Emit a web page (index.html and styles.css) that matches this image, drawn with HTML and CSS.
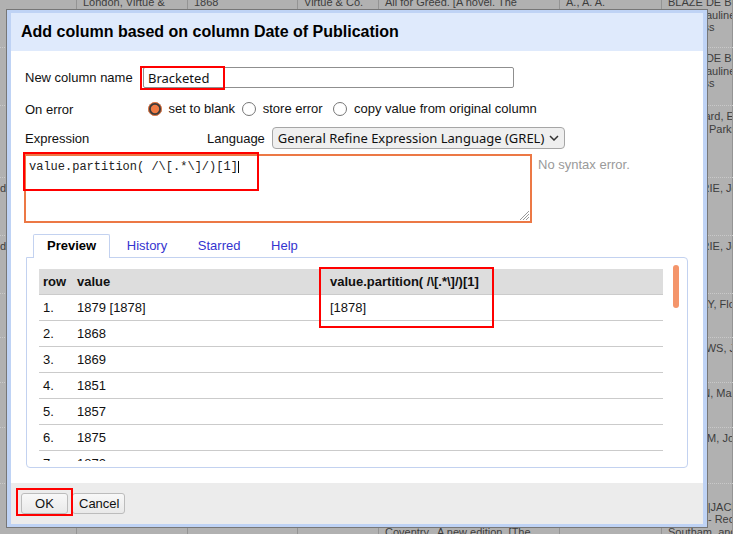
FILE: index.html
```html
<!DOCTYPE html>
<html>
<head>
<meta charset="utf-8">
<title>Add column</title>
<link rel="stylesheet" href="styles.css">
</head>
<body>
<div class="bg">
  <div class="bgrow h0">
    <div class="c c0"></div>
    <div class="c">London, Virtue &amp;</div>
    <div class="c">1868</div>
    <div class="c">Virtue &amp; Co.</div>
    <div class="c">All for Greed. [A novel. The</div>
    <div class="c">A., A. A.</div>
    <div class="c">BLAZE DE BURY,<br>Marie Pauline Rose<br>Baroness</div>
  </div>
  <div class="bgrow h1">
    <div class="c c0"></div><div class="c"></div><div class="c"></div><div class="c"></div><div class="c"></div><div class="c"></div>
    <div class="c">BLAZE DE BURY,<br>Marie Pauline Rose<br>Baroness</div>
  </div>
  <div class="bgrow h2">
    <div class="c c0"></div><div class="c"></div><div class="c"></div><div class="c"></div><div class="c"></div><div class="c"></div>
    <div class="c">Woodward, Ernest<br>Richard Parks.</div>
  </div>
  <div class="bgrow h3">
    <div class="c c0">d</div><div class="c"></div><div class="c"></div><div class="c"></div><div class="c"></div><div class="c"></div>
    <div class="c">GOODRIE, John</div>
  </div>
  <div class="bgrow h4">
    <div class="c c0">d</div><div class="c"></div><div class="c"></div><div class="c"></div><div class="c"></div><div class="c"></div>
    <div class="c">GOODRIE, Jones</div>
  </div>
  <div class="bgrow h5">
    <div class="c c0"></div><div class="c"></div><div class="c"></div><div class="c"></div><div class="c"></div><div class="c"></div>
    <div class="c">MURRAY, Florence</div>
  </div>
  <div class="bgrow h6">
    <div class="c c0"></div><div class="c"></div><div class="c"></div><div class="c"></div><div class="c"></div><div class="c"></div>
    <div class="c">MATHEWS, James</div>
  </div>
  <div class="bgrow h7">
    <div class="c c0"></div><div class="c"></div><div class="c"></div><div class="c"></div><div class="c"></div><div class="c"></div>
    <div class="c">BROWN, Mary</div>
  </div>
  <div class="bgrow h8">
    <div class="c c0"></div><div class="c"></div><div class="c"></div><div class="c"></div><div class="c"></div><div class="c"></div>
    <div class="c">GRAHAM, John</div>
  </div>
  <div class="bgrow h9">
    <div class="c c0"></div><div class="c"></div><div class="c"></div>
    <div class="c"></div>
    <div class="c"><br><br><br>Coventry<span class="gap">A new edition. [The</span></div>
    <div class="c"></div>
    <div class="c">LEE, A.<br>HARIS&nbsp; |JACKSON<br>Walters - Recorder<br>Southam, and</div>
  </div>
</div>

<div class="dialog">
  <div class="dlg-head">Add column based on column Date of Publication</div>
  <div class="dlg-body">
    <div class="frow r-name">
      <label class="lbl" for="colname">New column name</label>
      <input id="colname" class="name-input" type="text" value="Bracketed">
    </div>
    <div class="frow r-err">
      <span class="lbl">On error</span>
      <div class="radios"><label class="opt"><input type="radio" name="onerr" checked> set to blank</label><label class="opt next"><input type="radio" name="onerr"> store error</label> <label class="opt next"><input type="radio" name="onerr"> copy value from original column</label></div>
    </div>
    <div class="frow r-expr">
      <span class="lbl lbl-expr">Expression</span>
      <span class="lang">Language</span>
      <div class="select"><span>General Refine Expression Language (GREL)</span><svg class="chev" width="10" height="6" viewBox="0 0 10 6"><polyline points="1,1 5,5 9,1" fill="none" stroke="#333" stroke-width="1.5"/></svg></div>
    </div>
    <div class="frow r-area">
      <div class="area"><span class="code">value.partition( /\[.*\]/)[1]</span><span class="caret"></span><svg class="grip" width="10" height="10" viewBox="0 0 10 10"><line x1="10" y1="1" x2="1" y2="10" stroke="#999" stroke-width="1"/><line x1="10" y1="4" x2="4" y2="10" stroke="#999" stroke-width="1"/><line x1="10" y1="7" x2="7" y2="10" stroke="#999" stroke-width="1"/></svg></div>
      <div class="status">No syntax error.</div>
    </div>
    <div class="tabs">
      <ul class="tablist">
        <li class="tab active">Preview</li>
        <li class="tab">History</li>
        <li class="tab">Starred</li>
        <li class="tab">Help</li>
      </ul>
      <div class="panel">
        <div class="scroll">
          <table class="preview">
            <colgroup><col class="k1"><col class="k2"><col class="k3"></colgroup>
            <thead>
              <tr><th>row</th><th>value</th><th>value.partition( /\[.*\]/)[1]</th></tr>
            </thead>
            <tbody>
              <tr><td>1.</td><td>1879 [1878]</td><td>[1878]</td></tr>
              <tr><td>2.</td><td>1868</td><td></td></tr>
              <tr><td>3.</td><td>1869</td><td></td></tr>
              <tr><td>4.</td><td>1851</td><td></td></tr>
              <tr><td>5.</td><td>1857</td><td></td></tr>
              <tr><td>6.</td><td>1875</td><td></td></tr>
              <tr><td>7.</td><td>1872</td><td></td></tr>
            </tbody>
          </table>
          <div class="thumb"></div>
        </div>
      </div>
    </div>
  </div>
  <div class="dlg-foot">
    <button class="btn ok" type="button">OK</button>
    <button class="btn cancel" type="button">Cancel</button>
  </div>
</div>

<div class="mark m-name"></div>
<div class="mark m-expr"></div>
<div class="mark m-col"></div>
<div class="mark m-ok"></div>
</body>
</html>
```

FILE: styles.css
```css
html, body {
  margin: 0;
  padding: 0;
}
body {
  width: 733px;
  height: 534px;
  overflow: hidden;
  position: relative;
  background: #b1b1b1;
  font-family: "Liberation Sans", Arial, sans-serif;
  font-size: 13px;
  color: #111;
}

/* background spreadsheet */
.bg {
  margin-top: -8px;
}
.bgrow {
  display: grid;
  grid-template-columns: 77px 111px 110px 81px 181px 102px 1fr;
  border-top: 1px dotted #c9c9c9;
  box-sizing: border-box;
}
.bgrow.h0 { height: 55px; border-top: none; }
.bgrow.h1 { height: 58px; }
.bgrow.h2 { height: 72px; }
.bgrow.h3 { height: 58px; }
.bgrow.h4 { height: 58px; }
.bgrow.h5 { height: 44px; }
.bgrow.h6 { height: 45px; }
.bgrow.h7 { height: 45px; }
.bgrow.h8 { height: 56px; }
.bgrow.h9 { height: 60px; }
.c {
  border-right: 1px solid #949494;
  padding: 4px 6px 0;
  font-size: 11px;
  line-height: 12.5px;
  color: #3d3d3d;
  white-space: nowrap;
  overflow: hidden;
}
.c.c0 { padding-left: 0; }
.gap { margin-left: 8px; }

/* dialog */
.dialog {
  position: absolute;
  left: 6px;
  top: 9px;
  width: 702px;
  height: 519px;
  box-sizing: border-box;
  border: 1px solid #777;
  background: #bfd3f5;
  padding: 3px 4px;
  display: flex;
  flex-direction: column;
}
.dlg-head {
  height: 38px;
  flex: none;
  background: #dfeafc;
  display: flex;
  align-items: center;
  padding-left: 10px;
  font-weight: bold;
  font-size: 16px;
  color: #000;
}
.dlg-body {
  height: 432px;
  flex: none;
  box-sizing: border-box;
  background: #fff;
  padding: 16px 15px 0 14px;
}
.dlg-foot {
  height: 41px;
  flex: none;
  box-sizing: border-box;
  background: #ececec;
  padding: 10px 10px 0;
  display: flex;
  gap: 4px;
  align-items: flex-start;
}

.frow {
  display: flex;
  align-items: center;
}
.lbl {
  width: 118px;
  flex: none;
}
.r-name { height: 21px; }
.name-input {
  width: 371px;
  height: 21px;
  box-sizing: border-box;
  border: 1px solid #8f8f8f;
  border-radius: 2px;
  padding: 0 4px;
  margin: 0;
  font-family: "Noto Sans", sans-serif;
  font-size: 13px;
  color: #111;
  outline: none;
}

.r-err {
  height: 22px;
  margin-top: 10px;
}
.radios {
  white-space: nowrap;
  line-height: 15px;
}
.opt input {
  accent-color: #ef7a43;
  width: 14px;
  height: 14px;
  margin: 0 3px 0 5px;
  vertical-align: middle;
  position: relative;
  top: -1px;
}
.opt.next input {
  margin-left: 7px;
}

.r-expr {
  height: 22px;
  margin-top: 7px;
}
.lbl-expr { width: 182px; }
.lang { margin-right: 7px; }
.select {
  width: 293px;
  height: 22px;
  box-sizing: border-box;
  border: 1px solid #a6a6a6;
  border-radius: 4px;
  background: #efefef;
  display: flex;
  align-items: center;
  padding-left: 5px;
  font-family: "Noto Sans", sans-serif;
  font-size: 13px;
  color: #111;
}
.chev {
  margin-left: auto;
  margin-right: 5px;
}

.r-area {
  margin-top: 5px;
  align-items: flex-start;
}
.area {
  position: relative;
  width: 508px;
  height: 69px;
  margin-left: -1px;
  box-sizing: border-box;
  border: 2px solid #ec7845;
  padding: 4px 3px;
  font-family: "Liberation Mono", "Courier New", monospace;
  font-size: 12px;
  line-height: 15px;
  color: #222;
  white-space: pre;
}
.caret {
  display: inline-block;
  width: 1px;
  height: 12px;
  background: #000;
  vertical-align: -3px;
}
.grip {
  position: absolute;
  right: 1px;
  bottom: 1px;
}
.status {
  margin-left: 6px;
  margin-top: 3px;
  line-height: 15px;
  color: #9a9a9a;
}

/* tabs */
.tabs {
  margin-top: 11px;
  margin-left: 1px;
  width: 662px;
}
.tablist {
  list-style: none;
  margin: 0;
  padding: 0 0 0 7px;
  display: flex;
  gap: 2.6px;
  position: relative;
  z-index: 1;
}
.tab {
  height: 22px;
  line-height: 22px;
  padding: 0 13px;
  border: 1px solid transparent;
  border-bottom: none;
  color: #3434cf;
}
.tab.active {
  border-color: #c3d2f0;
  border-radius: 2px 2px 0 0;
  background: #fff;
  color: #000;
  font-weight: bold;
  height: 23px;
  margin-bottom: -1px;
}
.panel {
  height: 211px;
  box-sizing: border-box;
  border: 1px solid #c3d2f0;
  border-radius: 0 4px 4px 4px;
  padding: 7px 8px 6px 12px;
}
.scroll {
  position: relative;
  height: 196px;
  overflow: hidden;
}
.thumb {
  position: absolute;
  right: 0;
  top: 0;
  width: 6px;
  height: 43px;
  border-radius: 3px;
  background: #f4956b;
}
.preview {
  margin-top: 4px;
  width: 624px;
  border-collapse: collapse;
  table-layout: fixed;
}
.k1 { width: 34px; }
.k2 { width: 253px; }
.k3 { width: 337px; }
.preview th,
.preview td {
  height: 25px;
  padding: 0 4px;
  text-align: left;
  vertical-align: middle;
  border-bottom: 1px solid #cbcbcb;
  white-space: nowrap;
  font-size: 13px;
  color: #111;
}
.preview th {
  background: #dddddd;
  font-weight: bold;
}

/* buttons */
.btn {
  height: 21px;
  box-sizing: border-box;
  margin: 0;
  border: 1px solid #bcbcbc;
  border-radius: 3px;
  background: linear-gradient(#f8f8f8, #e9e9e9);
  font-family: "Liberation Sans", Arial, sans-serif;
  font-size: 13px;
  color: #111;
  padding: 0 6px;
}
.btn.ok { width: 47px; }
.btn.cancel { width: 53px; }

/* annotation boxes */
.mark {
  position: absolute;
  box-sizing: border-box;
  border: 2px solid #ff0000;
}
.m-name { left: 140px; top: 66px; width: 85px; height: 24px; }
.m-expr { left: 23px; top: 152px; width: 236px; height: 39px; }
.m-col { left: 319px; top: 267px; width: 175px; height: 61px; }
.m-ok { left: 16px; top: 488px; width: 57px; height: 28px; }
```
